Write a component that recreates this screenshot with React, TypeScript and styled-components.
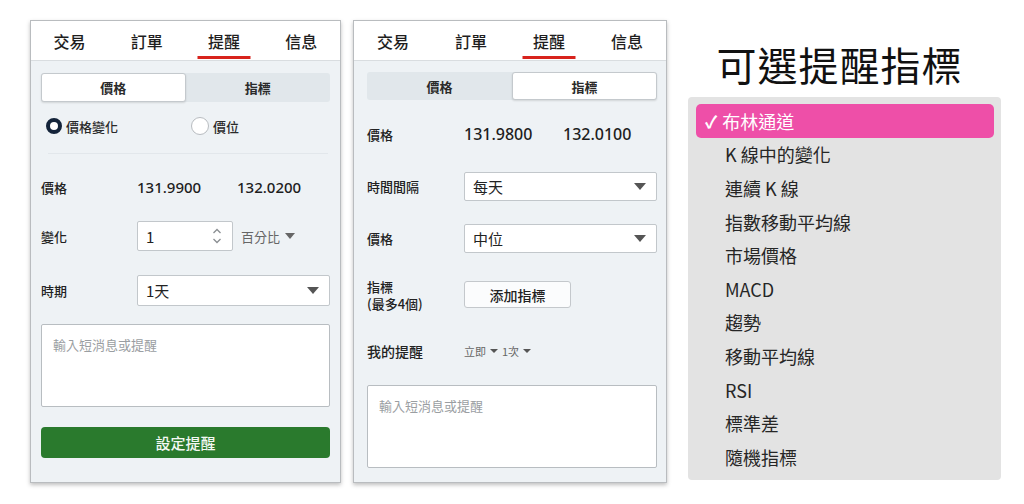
import React from 'react';
import styled, { createGlobalStyle } from 'styled-components';

const GlobalStyle = createGlobalStyle`
  html, body {
    margin: 0;
    padding: 0;
    background: #ffffff;
    font-family: "Noto Sans CJK TC", "Noto Sans", "Liberation Sans", sans-serif;
    color: #222;
  }
`;

const Page = styled.div`
  display: flex;
  align-items: flex-start;
  width: 1024px;
  height: 504px;
  padding: 20px 0 0 30px;
  box-sizing: border-box;
`;

const Panel = styled.div<{ $w: number; $ml?: number }>`
  width: ${p => p.$w}px;
  height: 463px;
  margin-left: ${p => p.$ml ?? 0}px;
  box-sizing: border-box;
  border: 1px solid #b9bcbf;
  background: #eef2f5;
  box-shadow: 0 2px 4px rgba(0, 0, 0, 0.25);
  display: flex;
  flex-direction: column;
`;

const Tabs = styled.div`
  display: flex;
  height: 39px;
  background: #fff;
  border-bottom: 1px solid #d9dde0;
  flex-shrink: 0;
`;

const Tab = styled.div<{ $active?: boolean }>`
  flex: 1;
  display: flex;
  align-items: center;
  justify-content: center;
  position: relative;
  font-size: 16px;
  font-weight: 500;
  color: #1e1e1e;

  &::after {
    content: '';
    display: ${p => (p.$active ? 'block' : 'none')};
    position: absolute;
    bottom: 1px;
    left: 50%;
    transform: translateX(-50%);
    width: 53px;
    height: 3px;
    background: #d8231d;
  }
`;

const Body = styled.div<{ $pl: number; $pr: number }>`
  padding: 0 ${p => p.$pr}px 0 ${p => p.$pl}px;
  display: flex;
  flex-direction: column;
`;

const Segmented = styled.div<{ $mt: number; $h: number }>`
  display: flex;
  height: ${p => p.$h}px;
  margin-top: ${p => p.$mt}px;
  background: #e1e7eb;
  border-radius: 3px;
`;

const Segment = styled.div<{ $active?: boolean }>`
  flex: 1;
  display: flex;
  align-items: center;
  justify-content: center;
  font-size: 13px;
  font-weight: 700;
  color: #2a2a2a;
  border-radius: 3px;
  background: ${p => (p.$active ? '#fff' : 'transparent')};
  border: 1px solid ${p => (p.$active ? '#c4c9cd' : 'transparent')};
  box-shadow: ${p => (p.$active ? '0 1px 2px rgba(0,0,0,0.12)' : 'none')};
`;

const RadioRow = styled.div`
  display: flex;
  align-items: center;
  height: 22px;
  margin-top: 13px;
  padding-left: 5px;
`;

const RadioItem = styled.label<{ $w?: number }>`
  display: flex;
  align-items: center;
  gap: 4px;
  width: ${p => (p.$w ? `${p.$w}px` : 'auto')};
  font-size: 13px;
  font-weight: 500;
  color: #2a2a2a;
`;

const RadioDot = styled.span<{ $on?: boolean }>`
  width: ${p => (p.$on ? 8 : 16)}px;
  height: ${p => (p.$on ? 8 : 16)}px;
  border-radius: 50%;
  background: #fff;
  border: ${p => (p.$on ? '4px solid #14243a' : '1px solid #b8bcc0')};
  box-sizing: content-box;
  flex-shrink: 0;
`;

const Divider = styled.div`
  height: 1px;
  background: #e2e7eb;
  margin: 16px 2px 0 7px;
`;

const Row = styled.div<{ $mt: number; $h?: number }>`
  display: flex;
  align-items: center;
  margin-top: ${p => p.$mt}px;
  height: ${p => p.$h ?? 30}px;
`;

const Label = styled.div<{ $w: number; $size?: number }>`
  width: ${p => p.$w}px;
  flex-shrink: 0;
  font-size: ${p => p.$size ?? 13}px;
  font-weight: 500;
  color: #222;
  line-height: 17px;
`;

const Value = styled.div<{ $w: number; $size: number }>`
  width: ${p => p.$w}px;
  font-size: ${p => p.$size}px;
  font-family: "Noto Sans", "Liberation Sans", sans-serif;
  font-weight: 500;
  color: #1e1e1e;
`;

const Field = styled.div<{ $w?: number }>`
  ${p => (p.$w ? `width: ${p.$w}px;` : 'flex: 1;')}
  height: 100%;
  box-sizing: border-box;
  background: #fff;
  border: 1px solid #c2c7cb;
  border-radius: 2px;
  display: flex;
  align-items: center;
  justify-content: space-between;
  padding: 0 10px 0 8px;
  font-size: 15px;
  color: #222;
`;

const Caret = styled.span<{ $size?: number; $color?: string }>`
  width: 0;
  height: 0;
  border-left: ${p => (p.$size ?? 6)}px solid transparent;
  border-right: ${p => (p.$size ?? 6)}px solid transparent;
  border-top: ${p => Math.round((p.$size ?? 6) * 1.1)}px solid ${p => p.$color ?? '#555'};
  display: inline-block;
`;

const Spinner = styled.svg`
  display: block;
`;

const Unit = styled.div`
  display: flex;
  align-items: center;
  gap: 5px;
  margin-left: 8px;
  font-size: 13px;
  color: #666;
`;

const TextArea = styled.div<{ $mt: number; $h: number }>`
  margin-top: ${p => p.$mt}px;
  height: ${p => p.$h}px;
  box-sizing: border-box;
  background: #fff;
  border: 1px solid #b8bdc1;
  border-radius: 2px;
  padding: 10px 11px;
  font-size: 13px;
  color: #9a9ea2;
`;

const SubmitButton = styled.button`
  margin-top: 20px;
  height: 31px;
  border: none;
  border-radius: 4px;
  background: #2a7a2d;
  color: #f4f8f4;
  font-family: inherit;
  font-size: 15px;
  font-weight: 500;
`;

const AddButton = styled.button`
  width: 107px;
  height: 27px;
  box-sizing: border-box;
  background: #fbfcfd;
  border: 1px solid #c4c8cc;
  border-radius: 3px;
  font-family: inherit;
  font-size: 14px;
  font-weight: 500;
  color: #222;
`;

const AlertOpts = styled.div`
  display: flex;
  align-items: center;
  gap: 4px;
  font-size: 11px;
  color: #666;
  font-family: "Noto Sans CJK TC", "Liberation Serif", serif;
`;

const Side = styled.div`
  margin-left: 21px;
  width: 313px;
  display: flex;
  flex-direction: column;
  align-items: center;
`;

const Title = styled.h1`
  margin: 13px 0 2px -10px;
  height: 62px;
  font-size: 40px;
  font-weight: 400;
  line-height: 62px;
  color: #111;
  letter-spacing: 1px;
`;

const List = styled.div`
  width: 313px;
  height: 383px;
  box-sizing: border-box;
  background: #e3e3e3;
  border-radius: 4px;
  padding: 7px 7px 0 8px;
  display: flex;
  flex-direction: column;
`;

const ListItem = styled.div<{ $selected?: boolean }>`
  height: 33.6px;
  flex-shrink: 0;
  display: flex;
  align-items: center;
  border-radius: 5px;
  padding-left: ${p => (p.$selected ? 9 : 29)}px;
  background: ${p => (p.$selected ? '#ee4fa8' : 'transparent')};
  color: ${p => (p.$selected ? '#fff' : '#262626')};
  font-size: 18px;
  font-weight: 400;
  gap: 5px;
`;

const Check = styled.span`
  font-weight: 700;
  font-size: 17px;
`;

const tabs = ['交易', '訂單', '提醒', '信息'];

const indicators = [
  '布林通道',
  'K 線中的變化',
  '連續 K 線',
  '指數移動平均線',
  '市場價格',
  'MACD',
  '趨勢',
  '移動平均線',
  'RSI',
  '標準差',
  '隨機指標',
];

const TabBar = () => (
  <Tabs>
    {tabs.map(t => (
      <Tab key={t} $active={t === '提醒'}>
        {t}
      </Tab>
    ))}
  </Tabs>
);

const PricePanel = () => (
  <Panel $w={311}>
    <TabBar />
    <Body $pl={10} $pr={10}>
      <Segmented $mt={12} $h={29}>
        <Segment $active>價格</Segment>
        <Segment>指標</Segment>
      </Segmented>
      <RadioRow>
        <RadioItem $w={145}>
          <RadioDot $on />
          價格變化
        </RadioItem>
        <RadioItem>
          <RadioDot />
          價位
        </RadioItem>
      </RadioRow>
      <Divider />
      <Row $mt={18}>
        <Label $w={96}>價格</Label>
        <Value $w={100} $size={15}>131.9900</Value>
        <Value $w={80} $size={15}>132.0200</Value>
      </Row>
      <Row $mt={19}>
        <Label $w={96}>變化</Label>
        <Field $w={96}>
          1
          <Spinner width="10" height="18" viewBox="0 0 10 18">
            <path d="M1.5 6 L5 2.5 L8.5 6" fill="none" stroke="#8a8e92" strokeWidth="1.3" />
            <path d="M1.5 12 L5 15.5 L8.5 12" fill="none" stroke="#8a8e92" strokeWidth="1.3" />
          </Spinner>
        </Field>
        <Unit>
          百分比
          <Caret $size={5} $color="#666" />
        </Unit>
      </Row>
      <Row $mt={24} $h={31}>
        <Label $w={96}>時期</Label>
        <Field>
          1天
          <Caret />
        </Field>
      </Row>
      <TextArea $mt={18} $h={83}>
        輸入短消息或提醒
      </TextArea>
      <SubmitButton>設定提醒</SubmitButton>
    </Body>
  </Panel>
);

const IndicatorPanel = () => (
  <Panel $w={314} $ml={12}>
    <TabBar />
    <Body $pl={13} $pr={9}>
      <Segmented $mt={11} $h={28}>
        <Segment>價格</Segment>
        <Segment $active>指標</Segment>
      </Segmented>
      <Row $mt={19}>
        <Label $w={97}>價格</Label>
        <Value $w={99} $size={16}>131.9800</Value>
        <Value $w={80} $size={16}>132.0100</Value>
      </Row>
      <Row $mt={23} $h={29}>
        <Label $w={97}>時間間隔</Label>
        <Field>
          每天
          <Caret />
        </Field>
      </Row>
      <Row $mt={23} $h={29}>
        <Label $w={97}>價格</Label>
        <Field>
          中位
          <Caret />
        </Field>
      </Row>
      <Row $mt={27} $h={29}>
        <Label $w={97}>
          指標
          <br />
          (最多4個)
        </Label>
        <AddButton>添加指標</AddButton>
      </Row>
      <Row $mt={27} $h={30}>
        <Label $w={97} $size={14}>我的提醒</Label>
        <AlertOpts>
          立即 <Caret $size={4} $color="#555" />1次 <Caret $size={4} $color="#555" />
        </AlertOpts>
      </Row>
      <TextArea $mt={19} $h={83}>
        輸入短消息或提醒
      </TextArea>
    </Body>
  </Panel>
);

const IndicatorList = () => (
  <Side>
    <Title>可選提醒指標</Title>
    <List>
      {indicators.map((name, i) => (
        <ListItem key={name} $selected={i === 0}>
          {i === 0 && <Check>✓</Check>}
          {name}
        </ListItem>
      ))}
    </List>
  </Side>
);

export default function App() {
  return (
    <>
      <GlobalStyle />
      <Page>
        <PricePanel />
        <IndicatorPanel />
        <IndicatorList />
      </Page>
    </>
  );
}
